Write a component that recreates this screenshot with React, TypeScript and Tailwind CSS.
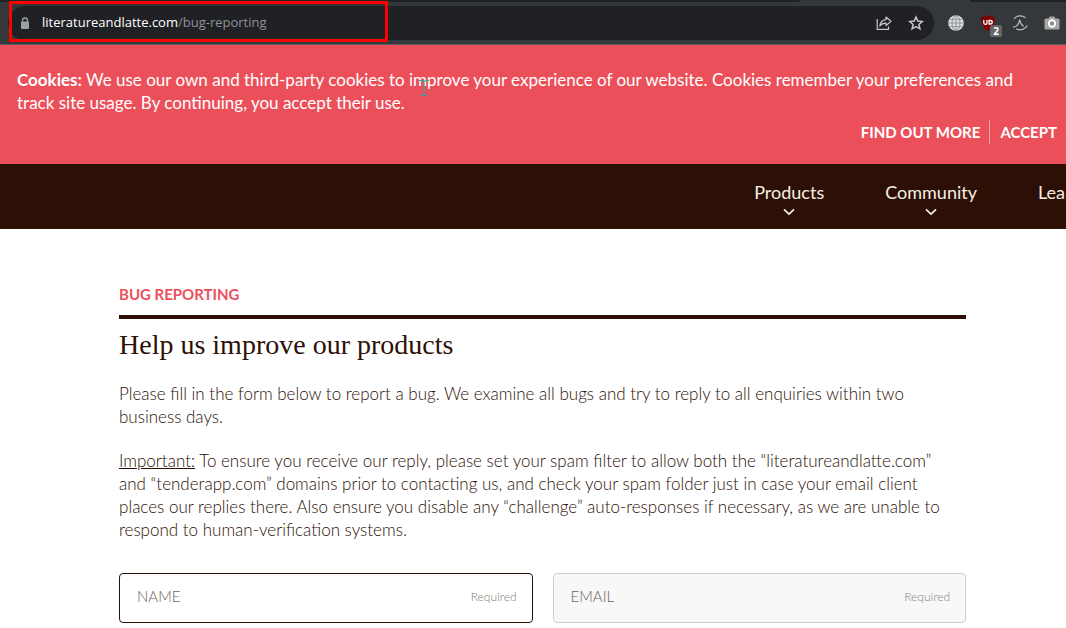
import { useState } from 'react'

const navItems = ['Products', 'Community', 'Learn & Support']

const fields = [
  { id: 'name', label: 'NAME', type: 'text' },
  { id: 'email', label: 'EMAIL', type: 'email' },
]

const iconButton = 'flex size-5 shrink-0 items-center justify-center'

function LockIcon() {
  return (
    <svg width="10" height="13" viewBox="0 0 10 13" aria-hidden="true">
      <path d="M2.5 5.5V3.5a2.5 2.5 0 0 1 5 0v2" fill="none" stroke="#9aa0a6" strokeWidth="1.3" />
      <rect x="1" y="4.500" width="8" height="7.500" rx="0.8" fill="#9aa0a6" />
    </svg>
  )
}

function ShareIcon() {
  return (
    <svg width="16" height="16" viewBox="0 0 16 16" fill="none" stroke="#c6c8ca" strokeWidth="1.2" aria-hidden="true">
      <path d="M1.2 4v10.3h11.3V11.5" />
      <path d="M10 2l5 4.3-5 4.3V8.1C7.4 8 5.3 8.9 3.8 11c.4-3.8 2.4-6 6.2-6.4z" strokeLinejoin="round" />
    </svg>
  )
}

function StarIcon() {
  return (
    <svg width="16" height="16" viewBox="0 0 16 16" fill="none" stroke="#c6c8ca" strokeWidth="1.5" aria-hidden="true">
      <path d="M8 2l1.800 4.100 4.400.4-3.300 2.900 1 4.400L8 11.500l-3.900 2.300 1-4.400L1.800 6.500l4.400-.4z" />
    </svg>
  )
}

function GlobeIcon() {
  return (
    <svg width="16" height="16" viewBox="0 0 16 16" aria-hidden="true">
      <circle cx="8" cy="8" r="7.800" fill="#dcdddd" />
      <g fill="none" stroke="#77797c" strokeWidth="0.7">
        <path d="M8 .5v15M.5 8h15M1.700 4.300h12.600M1.700 11.700h12.600" />
        <ellipse cx="8" cy="8" rx="4" ry="7.500" />
      </g>
    </svg>
  )
}

function ShieldIcon() {
  return (
    <svg width="16" height="16" viewBox="0 0 16 16" aria-hidden="true">
      <path d="M8 0c2 1.400 4 1.800 6.600 1.800 0 6.600-.6 10.700-6.600 14.200C2 12.500 1.400 8.400 1.400 1.800 4 1.800 6 1.400 8 0z" fill="#800000" />
      <path d="M3.800 5v2.800c0 2.200 3.200 2.200 3.200 0V5" fill="none" stroke="#fff" strokeWidth="1.300" />
      <path d="M9.100 5.500h1.200c2.600 0 2.600 3.500 0 3.500H9.100z" fill="none" stroke="#fff" strokeWidth="1.300" />
    </svg>
  )
}

function CompassIcon() {
  return (
    <svg width="16" height="16" viewBox="0 0 16 16" fill="none" stroke="#b3b5b7" strokeWidth="1.300" aria-hidden="true">
      <path d="M2 4C4.200.2 9.800-.2 13.500 2.800" />
      <path d="M15.300 10.500c-1.800 3.800-6.800 5.300-11 3.300" />
      <path d="M1 12.200c3.800-.4 6.200-3.200 6.700-7.700.4 3.200 1.500 5.300 3.800 7" />
    </svg>
  )
}

function CameraIcon() {
  return (
    <svg width="16" height="16" viewBox="0 0 16 16" aria-hidden="true">
      <path d="M2 3.500h2.500L5.700 1.500h4.600l1.200 2H14a1.500 1.500 0 0 1 1.500 1.500v8a1.500 1.500 0 0 1-1.500 1.500H2A1.500 1.500 0 0 1 .5 13V5A1.500 1.500 0 0 1 2 3.500z" fill="#a5a5a5" />
      <circle cx="8" cy="8.500" r="3.200" fill="#8b8d8f" stroke="#fff" strokeWidth="1.900" />
    </svg>
  )
}

function ChevronIcon() {
  return (
    <svg width="12" height="8" viewBox="0 0 12 8" fill="none" stroke="#f7efe3" strokeWidth="1.700" aria-hidden="true">
      <path d="M1 1.300l5 4.700 5-4.700" />
    </svg>
  )
}

function BrowserBar() {
  return (
    <div className="relative border-b border-[#5c5e61] bg-[#35383b]">
      {/* bottoms of the two tab strips either side of the active tab */}
      <div className="flex h-0.5 justify-between">
        <div className="w-3/4 rounded-br bg-[#202124]" />
        <div className="w-[9%] rounded-bl bg-[#202124]" />
      </div>
      <div className="flex items-center gap-3 pt-1 pr-1 pb-1 pl-2">
        <div className="flex h-[34px] min-w-0 flex-1 items-center rounded-full bg-[#202124] pr-2 pl-3">
          <LockIcon />
          <div className="ml-3 flex-1 truncate font-['Open_Sans',sans-serif] text-[13px] text-[#8f9296]">
            <span className="text-white">literatureandlatte.com</span>/bug-reporting
          </div>
          <div className="flex gap-3">
            <button type="button" aria-label="Share" className={iconButton}>
              <ShareIcon />
            </button>
            <button type="button" aria-label="Bookmark" className={iconButton}>
              <StarIcon />
            </button>
          </div>
        </div>
        <div className="flex gap-3">
          <button type="button" aria-label="Translate" className={iconButton}>
            <GlobeIcon />
          </button>
          <button type="button" aria-label="Blocker" className={`relative ${iconButton}`}>
            <ShieldIcon />
            <span className="absolute -right-1 -bottom-1 h-3 w-3 rounded-xs bg-[#666] text-center font-['Open_Sans',sans-serif] text-[10px] leading-3 font-bold text-white">
              2
            </span>
          </button>
          <button type="button" aria-label="Compass" className={iconButton}>
            <CompassIcon />
          </button>
          <button type="button" aria-label="Capture" className={iconButton}>
            <CameraIcon />
          </button>
        </div>
      </div>
      <div className="pointer-events-none absolute top-px left-[9px] h-[41px] w-[379px] border-3 border-[#fe0000]" />
    </div>
  )
}

function CookieBanner() {
  return (
    <section className="relative bg-[#eb505a] pt-[23px] pr-[9px] pb-5 pl-[17px] text-white">
      <p className="pr-5 text-[17px] leading-[23px]">
        <strong className="font-bold">Cookies:</strong> We use our own and third-party cookies to improve your experience of our website. Cookies remember your preferences and track site usage. By continuing, you accept their use.
      </p>
      <div className="mt-[6px] flex justify-end text-[15px] leading-6 font-bold">
        <a href="#cookies" className="border-r border-white/50 pr-[9px]">
          FIND OUT MORE
        </a>
        <button type="button" className="pl-[10px]">
          ACCEPT
        </button>
      </div>
      <svg className="absolute top-[35px] left-[419px]" width="10" height="16" viewBox="0 0 10 16" fill="none" stroke="#14afa5" aria-hidden="true">
        <path d="M0 .5h3.500L5 1.500 6.500.5H10M5 1v14M1.500 15.500h2.500l1-1 1 1h2.500" />
      </svg>
    </section>
  )
}

function SiteNav() {
  return (
    <nav className="overflow-hidden bg-[#2c1005] pt-4 pb-[13px] pl-[70%] text-[#f7efe3]">
      <ul className="flex w-max gap-[61px] pl-2">
        {navItems.map((item) => (
          <li key={item}>
            <a href="#menu" className="flex flex-col items-center gap-[3px] text-[18px] leading-6">
              {item}
              <span className="flex h-[9px] items-center">
                <ChevronIcon />
              </span>
            </a>
          </li>
        ))}
      </ul>
    </nav>
  )
}

function BugForm() {
  const [values, setValues] = useState<Record<string, string>>({})

  return (
    <form className="mt-8 flex gap-5">
      {fields.map((f) => (
        <div
          key={f.id}
          className="flex h-[50px] min-w-0 flex-1 items-center rounded border border-[#d2cdcb] bg-[#f8f8f8] pr-[15px] pb-[3px] pl-[17px] first:border-[#2c1005] first:bg-white"
        >
          <input
            id={f.id}
            type={f.type}
            placeholder={f.label}
            value={values[f.id] ?? ''}
            onChange={(e) => setValues({ ...values, [f.id]: e.target.value })}
            className="min-w-0 flex-1 bg-transparent text-[15px] font-light outline-none placeholder:text-[#6b625e]"
          />
          <label htmlFor={f.id} className="text-[12px] font-light text-[#857d79]">
            Required
          </label>
        </div>
      ))}
    </form>
  )
}

export default function App() {
  return (
    <div className="overflow-hidden bg-white font-['Lato',sans-serif]">
      <BrowserBar />
      <CookieBanner />
      <SiteNav />
      <main className="pt-[53px] pr-[100px] pb-[5px] pl-[119px] text-[#2c1005]">
        <p className="text-[15px] leading-6 font-bold text-[#eb505a]">BUG REPORTING</p>
        <h1 className="mt-[9px] border-t-4 border-[#2c1005] pt-2 font-['Liberation_Serif',serif] text-[28px] leading-9">
          Help us improve our products
        </h1>
        <p className="mt-[19px] text-[17px] leading-[23px] font-light">
          Please fill in the form below to report a bug. We examine all bugs and try to reply to all enquiries within two business days.
        </p>
        <p className="mt-[21px] text-[17px] leading-[23px] font-light">
          <u>Important:</u> To ensure you receive our reply, please set your spam filter to allow both the “literatureandlatte.com”
          <br />
          and “tenderapp.com” domains prior to contacting us, and check your spam folder just in case your email client
          <br />
          places our replies there. Also ensure you disable any “challenge” auto-responses if necessary, as we are unable to
          <br />
          respond to human-verification systems.
        </p>
        <BugForm />
      </main>
    </div>
  )
}
